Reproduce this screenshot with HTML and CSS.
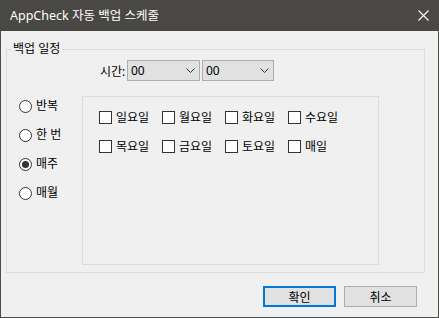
FILE: index.html
```html
<!DOCTYPE html>
<html lang="ko">
<head>
  <meta charset="UTF-8" />
  <title>AppCheck 자동 백업 스케줄</title>
  <link rel="stylesheet" href="styles.css">
</head>
<body>
  <div class="window">
    <!-- Title bar -->
    <div class="titlebar">
      <span class="title">AppCheck 자동 백업 스케줄</span>
      <svg class="close" width="11" height="11" viewBox="0 0 11 11">
        <path d="M0.5 0.5 L10.5 10.5 M10.5 0.5 L0.5 10.5" stroke="#fff" stroke-width="1.1" fill="none"/>
      </svg>
    </div>

    <div class="content">
      <fieldset class="group">
        <legend>백업 일정</legend>

        <!-- Time -->
        <div class="time-row">
          <span class="time-label">시간:</span>
          <div class="combo first">
            <span>00</span>
            <svg width="9" height="5" viewBox="0 0 9 5"><path d="M0.5 0.5 L4.5 4.5 L8.5 0.5" stroke="#333" fill="none"/></svg>
          </div>
          <div class="combo">
            <span>00</span>
            <svg width="9" height="5" viewBox="0 0 9 5"><path d="M0.5 0.5 L4.5 4.5 L8.5 0.5" stroke="#333" fill="none"/></svg>
          </div>
        </div>

        <div class="schedule">
          <!-- Repeat mode -->
          <div class="radios">
            <label class="radio"><span class="circle"></span>반복</label>
            <label class="radio"><span class="circle"></span>한 번</label>
            <label class="radio checked"><span class="circle"></span>매주</label>
            <label class="radio"><span class="circle"></span>매월</label>
          </div>

          <!-- Days -->
          <div class="panel">
            <div class="days">
              <label class="check"><span class="box"></span>일요일</label>
              <label class="check"><span class="box"></span>월요일</label>
              <label class="check"><span class="box"></span>화요일</label>
              <label class="check"><span class="box"></span>수요일</label>
              <label class="check"><span class="box"></span>목요일</label>
              <label class="check"><span class="box"></span>금요일</label>
              <label class="check"><span class="box"></span>토요일</label>
              <label class="check"><span class="box"></span>매일</label>
            </div>
          </div>
        </div>
      </fieldset>

      <!-- Buttons -->
      <div class="footer">
        <button class="btn default">확인</button>
        <button class="btn">취소</button>
      </div>
    </div>
  </div>
</body>
</html>
```

FILE: styles.css
```css
body {
  margin: 0;
  background-color: #f0f0f0;
  font-family: "Noto Sans", "Noto Sans CJK KR", sans-serif;
  font-size: 12px;
  color: #000;
}

/* Window frame */
.window {
  width: 439px;
  height: 318px;
  box-sizing: border-box;
  border: 1px solid #4f4d4a;
  border-top: none;
  background-color: #f0f0f0;
}

.titlebar {
  height: 31px;
  margin: 0 -1px;
  padding: 0 10px 0 10px;
  background-color: #4a4844;
  color: #fff;
  display: flex;
  align-items: center;
  justify-content: space-between;
}

.title {
  font-size: 12.5px;
  line-height: 16px;
}

.close {
  display: block;
}

/* Group box */
.group {
  margin: 10px 13px 0 5px;
  padding: 0 0 7px 0;
  border: 1px solid #dcdcdc;
  min-width: 0;
}

.group legend {
  margin-left: 4px;
  padding: 0 2px;
  line-height: 16px;
}

.time-row {
  display: flex;
  align-items: center;
  margin-top: 3px;
  padding-left: 93px;
}

.time-label {
  width: 27px;
}

.combo {
  width: 73px;
  height: 21px;
  box-sizing: border-box;
  border: 1px solid #adadad;
  background-color: #e1e1e1;
  display: flex;
  align-items: center;
  justify-content: space-between;
  padding: 0 4px 0 3px;
}

.combo.first {
  margin-right: 2px;
}

.combo + .combo {
  width: 72px;
}

.combo svg {
  display: block;
}

/* Radios + days panel */
.schedule {
  display: flex;
  margin-top: 15px;
}

.radios {
  width: 75px;
  padding: 2px 0 0 12px;
  box-sizing: border-box;
  display: flex;
  flex-direction: column;
  gap: 13px;
}

.radio {
  height: 16px;
  display: flex;
  align-items: center;
  gap: 4px;
  line-height: 16px;
}

.circle {
  width: 13px;
  height: 13px;
  box-sizing: border-box;
  border: 1px solid #333;
  border-radius: 50%;
  background-color: #fff;
  display: flex;
  align-items: center;
  justify-content: center;
}

.radio.checked .circle::after {
  content: "";
  width: 7px;
  height: 7px;
  border-radius: 50%;
  background-color: #333;
}

.panel {
  width: 297px;
  height: 169px;
  box-sizing: border-box;
  border: 1px solid #dcdcdc;
}

.days {
  display: grid;
  grid-template-columns: repeat(4, 63px);
  row-gap: 14px;
  padding: 13px 0 0 16px;
}

.check {
  height: 15px;
  display: flex;
  align-items: center;
  gap: 4px;
  line-height: 15px;
}

.box {
  width: 13px;
  height: 13px;
  box-sizing: border-box;
  border: 1px solid #333;
  background-color: #fff;
  flex-shrink: 0;
}

/* Footer buttons */
.footer {
  display: flex;
  justify-content: flex-end;
  gap: 8px;
  margin-top: 13px;
  padding-right: 21px;
}

.btn {
  width: 73px;
  height: 21px;
  padding: 0;
  border: 1px solid #adadad;
  background-color: #e1e1e1;
  font-family: inherit;
  font-size: 12px;
  color: #000;
}

.btn.default {
  border: 2px solid #0078d7;
}
```
